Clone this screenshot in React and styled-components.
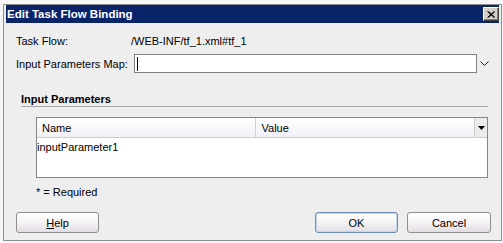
import React from 'react';
import styled, { createGlobalStyle } from 'styled-components';

const GlobalStyle = createGlobalStyle`
  html, body {
    margin: 0;
    padding: 0;
    background: #f7f7f7;
  }
  body {
    font-family: "Liberation Sans", Arial, sans-serif;
    font-size: 11px;
    color: #000;
  }
`;

// Page behind the dialog
const Screen = styled.div`
  width: 503px;
  height: 243px;
  box-sizing: border-box;
  overflow: hidden;
  padding: 4px 0 0 3px;
  background: #f7f7f7;
`;

const Dialog = styled.div`
  width: 499px;
  height: 237px;
  box-sizing: border-box;
  border: 1px solid #8f8f8f;
  padding: 0 2px 2px 2px;
  background: #eeeeee;
  display: flex;
  flex-direction: column;
`;

const TitleBar = styled.div`
  height: 18px;
  background: #0a246a;
  color: #fff;
  display: flex;
  align-items: center;
  justify-content: space-between;
  padding-left: 1px;
  font-weight: bold;
  font-size: 11.5px;
`;

const CloseButton = styled.div`
  width: 16px;
  height: 14px;
  box-sizing: border-box;
  background: #d4d0c8;
  border: 1px solid;
  border-color: #ffffff #404040 #404040 #ffffff;
  box-shadow: inset -1px -1px #808080;
  display: flex;
  align-items: center;
  justify-content: center;
`;

const Form = styled.div`
  display: grid;
  grid-template-columns: 115px 346px 1fr;
  row-gap: 6px;
  align-items: center;
  padding: 11px 0 0 10px;
`;

const Label = styled.div`
  line-height: 14px;
  white-space: nowrap;
`;

const Input = styled.div`
  margin-left: 3px;
  width: 343px;
  height: 19px;
  box-sizing: border-box;
  background: #fff;
  border: 1px solid #7f7f7f;
  display: flex;
  align-items: center;
  padding-left: 2px;
`;

const Caret = styled.div`
  width: 1px;
  height: 14px;
  background: #000;
`;

const Chevron = styled.div`
  display: flex;
  padding-left: 3px;
`;

const Section = styled.div`
  margin: 20px 11px 0 15px;
`;

const SectionTitle = styled.div`
  font-weight: bold;
  line-height: 13px;
  border-bottom: 1px solid #a8a8a8;
`;

const Table = styled.div`
  margin: 10px 0 0 15px;
  border: 1px solid #848484;
  background: #fff;
`;

const HeaderRow = styled.div`
  display: flex;
  height: 19px;
  border-bottom: 1px solid #cdcdcd;
  background: linear-gradient(#ffffff, #f1f0f7);
`;

const HeaderCell = styled.div`
  flex: 1;
  display: flex;
  align-items: center;
  padding-left: ${p => p.$pad}px;
  border-left: ${p => (p.$divider ? '1px solid #d0d0d0' : 'none')};
`;

const Corner = styled.div`
  width: 12px;
  border-left: 1px solid #d0d0d0;
  background: #ececec;
  display: flex;
  align-items: center;
  justify-content: center;
`;

const Body = styled.div`
  height: 39px;
`;

const Row = styled.div`
  height: 19px;
  line-height: 19px;
`;

const Note = styled.div`
  margin: 7px 0 0 30px;
  line-height: 14px;
`;

const ButtonBar = styled.div`
  display: flex;
  align-items: center;
  margin-top: 13px;
  padding: 0 8px 0 10px;
`;

const Button = styled.div`
  width: ${p => p.$w || 83}px;
  height: 21px;
  box-sizing: border-box;
  border: 1px solid ${p => (p.$default ? '#6f8db5' : '#8e8e8e')};
  border-radius: 3px;
  background: linear-gradient(#ffffff, #f3f1f3 55%, #e2dde2);
  box-shadow: ${p => (p.$default ? 'inset 0 0 0 1px #c5d5ea' : 'none')};
  display: flex;
  align-items: center;
  justify-content: center;
  margin-left: ${p => p.$ml || 0}px;
`;

const Spacer = styled.div`
  flex: 1;
`;

export default function App() {
  return (
    <Screen>
      <GlobalStyle />
      <Dialog>
        <TitleBar>
          <span>Edit Task Flow Binding</span>
          <CloseButton>
            <svg width="8" height="7" viewBox="0 0 8 7">
              <path d="M0.5 0.5 L7 6.5 M1.5 0.5 L8 6.5 M7 0.5 L0.5 6.5 M8 0.5 L1.5 6.5" stroke="#000" strokeWidth="1" />
            </svg>
          </CloseButton>
        </TitleBar>

        <Form>
          <Label>Task Flow:</Label>
          <Label>/WEB-INF/tf_1.xml#tf_1</Label>
          <div />
          <Label>Input Parameters Map:</Label>
          <Input>
            <Caret />
          </Input>
          <Chevron>
            <svg width="9" height="5" viewBox="0 0 9 5">
              <polyline points="0.5,0.5 4.5,4.5 8.5,0.5" fill="none" stroke="#222" strokeWidth="1" />
            </svg>
          </Chevron>
        </Form>

        <Section>
          <SectionTitle>Input Parameters</SectionTitle>
          <Table>
            <HeaderRow>
              <HeaderCell $pad={5}>Name</HeaderCell>
              <HeaderCell $pad={6} $divider>Value</HeaderCell>
              <Corner>
                <svg width="7" height="4" viewBox="0 0 7 4">
                  <polygon points="0,0 7,0 3.5,4" fill="#000" />
                </svg>
              </Corner>
            </HeaderRow>
            <Body>
              <Row>inputParameter1</Row>
            </Body>
          </Table>
        </Section>

        <Note>* = Required</Note>

        <ButtonBar>
          <Button>
            <span><u>H</u>elp</span>
          </Button>
          <Spacer />
          <Button $default>OK</Button>
          <Button $ml={9} $w={84}>Cancel</Button>
        </ButtonBar>
      </Dialog>
    </Screen>
  );
}
